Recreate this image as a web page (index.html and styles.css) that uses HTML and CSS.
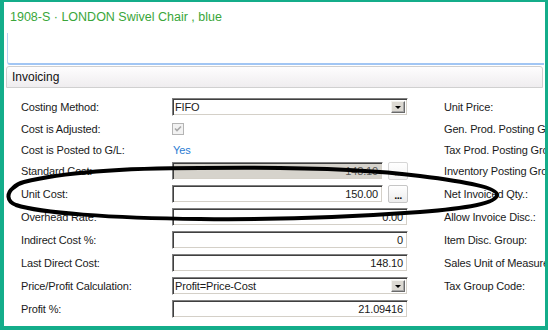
FILE: index.html
```html
<!DOCTYPE html>
<html>
<head>
<meta charset="utf-8">
<link rel="stylesheet" href="styles.css">
</head>
<body>
<div class="frame">
  <div class="title">1908-S · LONDON Swivel Chair , blue</div>
  <div class="notes"></div>
  <div class="tab">Invoicing</div>
  <div class="form">
    <div class="lbl">Costing Method:</div>
    <div class="field"><div class="box combo"><span class="val">FIFO</span><span class="drop"><svg width="6" height="3" viewBox="0 0 6 3"><path d="M0 0H6L3 3Z" fill="#000"/></svg></span></div></div>
    <div class="rlbl">Unit Price:</div>

    <div class="lbl">Cost is Adjusted:</div>
    <div class="field"><span class="check"><svg width="10" height="10" viewBox="0 0 10 10"><path d="M2 4.5L4 6.5L8 2.5" fill="none" stroke="#a8a8a8" stroke-width="1.6"/></svg></span></div>
    <div class="rlbl">Gen. Prod. Posting Group:</div>

    <div class="lbl">Cost is Posted to G/L:</div>
    <div class="field"><span class="yes">Yes</span></div>
    <div class="rlbl">Tax Prod. Posting Group:</div>

    <div class="lbl">Standard Cost:</div>
    <div class="field withbtn"><div class="box num disabled">148.10</div><span class="dots off">...</span></div>
    <div class="rlbl">Inventory Posting Group:</div>

    <div class="lbl">Unit Cost:</div>
    <div class="field withbtn"><div class="box num">150.00</div><span class="dots">...</span></div>
    <div class="rlbl">Net Invoiced Qty.:</div>

    <div class="lbl">Overhead Rate:</div>
    <div class="field"><div class="box num">0.00</div></div>
    <div class="rlbl">Allow Invoice Disc.:</div>

    <div class="lbl">Indirect Cost %:</div>
    <div class="field"><div class="box num">0</div></div>
    <div class="rlbl">Item Disc. Group:</div>

    <div class="lbl">Last Direct Cost:</div>
    <div class="field"><div class="box num">148.10</div></div>
    <div class="rlbl">Sales Unit of Measure:</div>

    <div class="lbl">Price/Profit Calculation:</div>
    <div class="field"><div class="box combo"><span class="val">Profit=Price-Cost</span><span class="drop"><svg width="6" height="3" viewBox="0 0 6 3"><path d="M0 0H6L3 3Z" fill="#000"/></svg></span></div></div>
    <div class="rlbl">Tax Group Code:</div>

    <div class="lbl">Profit %:</div>
    <div class="field"><div class="box num">21.09416</div></div>
    <div class="rlbl"></div>
  </div>
  <svg class="mark" width="548" height="330" viewBox="0 0 548 330">
    <path d="M24,182 C60,173 120,168 200,168 C280,167 360,168 420,176 C468,182 498,188 497,195 C496,203 470,208 420,212 C350,217 280,220 200,219 C110,218 40,213 16,205 C6,201 7,193 13,188 C16,185 20,183 24,182 Z" fill="none" stroke="#000" stroke-width="4" stroke-linejoin="round"/>
  </svg>
</div>
</body>
</html>
```

FILE: styles.css
```css
html, body {
  margin: 0;
  padding: 0;
  background: #fff;
}
.frame {
  position: relative;
  width: 548px;
  height: 330px;
  box-sizing: border-box;
  border-style: solid;
  border-color: #14ad8a;
  border-width: 2px 3px 4px 4px;
  overflow: hidden;
  font-family: "Liberation Sans", Arial, sans-serif;
  font-size: 11px;
  letter-spacing: -0.15px;
  color: #1a1a1a;
  background: #fff;
}
.title {
  margin: 8px 0 0 6px;
  font-size: 12.5px;
  line-height: 14px;
  letter-spacing: 0;
  color: #3aa63a;
  white-space: nowrap;
}
.notes {
  margin: 9px 1px 0 3px;
  height: 30px;
  border-left: 1px solid #b8d2f2;
  border-bottom: 2px solid #a2c6f4;
  border-bottom-left-radius: 3px;
}
.tab {
  margin: 1px 2px 0 2px;
  height: 20px;
  line-height: 20px;
  padding-left: 5px;
  font-size: 12px;
  letter-spacing: 0;
  color: #111;
  border: 1px solid #d0d0d0;
  border-radius: 3px 3px 0 0;
  background: linear-gradient(#fefdfe, #efedef);
}
.form {
  display: grid;
  grid-template-columns: 151px 236px 36px 1fr;
  grid-template-rows: 21px 23px 20px 22px 23px 23px 23px 23px 23px 23px;
  align-items: center;
  padding: 8px 0 0 17px;
}
.lbl, .rlbl {
  white-space: nowrap;
  line-height: 14px;
}
.rlbl {
  grid-column: 4;
}
.field {
  display: flex;
  align-items: center;
}
.withbtn {
  gap: 5px;
}
.box {
  flex: 1;
  height: 18px;
  box-sizing: border-box;
  border-top: 1px solid #808080;
  border-left: 1px solid #808080;
  border-right: 1px solid #fff;
  border-bottom: 1px solid #fff;
  box-shadow: inset 1px 1px 0 #404040, inset -1px -1px 0 #d4d0c8;
  background: #fff;
  line-height: 16px;
  white-space: nowrap;
  overflow: hidden;
}
.num {
  text-align: right;
  padding-right: 4px;
}
.disabled {
  background: #d6d3cc;
  color: #555;
}
.combo {
  display: flex;
  align-items: stretch;
  padding: 2px 2px 2px 2px;
  line-height: 12px;
}
.combo .val {
  flex: 1;
}
.drop {
  width: 14px;
  box-sizing: border-box;
  background: #dcd9d2;
  border-top: 1px solid #f4f3ef;
  border-left: 1px solid #f4f3ef;
  border-right: 1px solid #6a6a6a;
  border-bottom: 1px solid #6a6a6a;
  box-shadow: inset -1px -1px 0 #a8a8a8;
  display: flex;
  align-items: center;
  justify-content: center;
  padding-top: 2px;
}
.drop svg {
  display: block;
}
.dots {
  width: 20px;
  height: 18px;
  box-sizing: border-box;
  border: 1px solid #c6c6c6;
  border-radius: 2px;
  background: linear-gradient(#ffffff, #ececec);
  font-weight: bold;
  font-size: 11px;
  line-height: 18px;
  text-align: center;
  color: #111;
  letter-spacing: -0.5px;
}
.dots.off {
  color: #b0b0b0;
  background: linear-gradient(#ffffff, #f3f3f3);
  border-color: #d6d6d6;
}
.check {
  width: 12px;
  height: 12px;
  box-sizing: border-box;
  border: 1px solid #b4b4b4;
  background: #f2f2f2;
  display: flex;
  align-items: center;
  justify-content: center;
}
.check svg {
  display: block;
}
.yes {
  color: #2a7bd2;
  padding-left: 1px;
}
.mark {
  position: absolute;
  left: -4px;
  top: -2px;
  pointer-events: none;
}
```
